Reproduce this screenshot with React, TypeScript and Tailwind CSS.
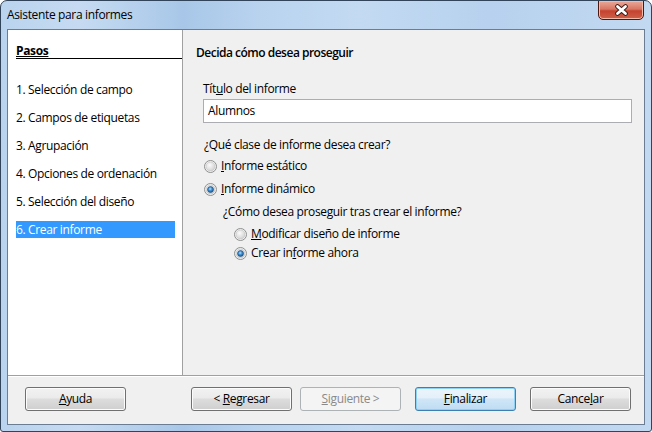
import React from 'react';

const font = { fontFamily: '"Segoe UI", "Open Sans", "Noto Sans", sans-serif' };

function Radio({ checked, id }: { checked?: boolean; id: string }) {
  return (
    <svg width="13" height="13" viewBox="0 0 13 13" className="shrink-0">
      <defs>
        <radialGradient id={`${id}-bg`} cx="0.4" cy="0.35" r="0.7">
          <stop offset="0" stopColor="#fbfbfb" />
          <stop offset="0.6" stopColor="#e2e2e2" />
          <stop offset="1" stopColor="#cfcfcf" />
        </radialGradient>
        <radialGradient id={`${id}-dot`} cx="0.45" cy="0.4" r="0.65">
          <stop offset="0" stopColor="#b9e3ff" />
          <stop offset="0.45" stopColor="#3f8fd2" />
          <stop offset="1" stopColor="#174f82" />
        </radialGradient>
      </defs>
      <circle cx="6.5" cy="6.5" r="6" fill="#f4f4f4" stroke="#8e8f8f" strokeWidth="1" />
      <circle cx="6.5" cy="6.5" r="4.5" fill={`url(#${id}-bg)`} stroke="#c2c2c2" strokeWidth="0.6" />
      {checked && <circle cx="6.5" cy="6.5" r="3" fill={`url(#${id}-dot)`} stroke="#1f4f7c" strokeWidth="0.6" />}
    </svg>
  );
}

function Button({ children, variant = 'normal', className = '' }: { children: React.ReactNode; variant?: 'normal' | 'default' | 'disabled'; className?: string }) {
  const base = 'h-[24px] w-[101px] rounded-[3px] border flex items-center justify-center text-[12px] shrink-0';
  if (variant === 'disabled') {
    return (
      <div className={`${base} ${className} border-[#adb2b5] bg-[#f4f4f4] text-[#8a8a8a]`}>
        <span>{children}</span>
      </div>
    );
  }
  if (variant === 'default') {
    return (
      <div className={`${base} ${className} border-[#3c7fb1] bg-[linear-gradient(#ebf4fb_0%,#e4f0fa_45%,#cfe6f7_50%,#bfdcf3_100%)] shadow-[inset_0_0_0_1px_#8ed1f5] text-black`}>
        <span>{children}</span>
      </div>
    );
  }
  return (
    <div className={`${base} ${className} border-[#707070] bg-[linear-gradient(#f2f2f2_0%,#ebebeb_45%,#dddddd_50%,#cfcfcf_100%)] shadow-[inset_0_0_0_1px_#fcfcfc] text-black`}>
      <span>{children}</span>
    </div>
  );
}

const steps = [
  '1. Selección de campo',
  '2. Campos de etiquetas',
  '3. Agrupación',
  '4. Opciones de ordenación',
  '5. Selección del diseño',
];

export default function App() {
  return (
    <div
      style={font}
      className="w-[652px] h-[432px] overflow-hidden rounded-t-[7px] rounded-b-[3px] border border-[#31445a] bg-[linear-gradient(90deg,#bad3ee_0%,#c6dbf2_12%,#a8c7e8_28%,#b9d3ef_40%,#c3daf2_55%,#b7d1ee_75%,#c2d9f1_100%)] text-[12px] tracking-[-0.35px] text-black"
    >
      {/* title bar */}
      <div className="h-[28px] flex items-start relative">
        <span className="pl-[6px] pt-[6px] leading-[16px] text-[12px] text-black">Asistente para informes</span>
        <div className="ml-auto mr-[7px] w-[46px] h-[20px] -mt-px rounded-b-[5px] border border-[#4b1812] bg-[linear-gradient(#e9a99a_0%,#d97663_45%,#c4432f_55%,#d0604a_100%)] shadow-[inset_0_0_0_1px_#f2b8a8] flex items-center justify-center">
          <svg width="15" height="12" viewBox="0 0 15 12">
            <path d="M3.5 2.5 L11.5 9.5 M11.5 2.5 L3.5 9.5" stroke="#3c1a14" strokeWidth="4.6" strokeLinecap="round" />
            <path d="M3.5 2.5 L11.5 9.5 M11.5 2.5 L3.5 9.5" stroke="#ffffff" strokeWidth="2.8" strokeLinecap="round" />
          </svg>
        </div>
      </div>

      {/* client area */}
      <div className="mx-[6px] h-[396px] border border-[#6b7d92] bg-[#f0f0f0] flex flex-col">
        <div className="h-[346px] flex border-b border-[#a0a0a0]">
          {/* steps */}
          <div className="w-[175px] bg-white border-r border-[#a0a0a0] pl-[8px] pt-[14px]">
            <div className="border-b border-black h-[15px] leading-[14px] font-bold">
              <span className="underline">Pasos</span>
            </div>
            <div className="mt-[22px] flex flex-col gap-[11px] pr-[7px]">
              {steps.map((s) => (
                <div key={s} className="h-[17px] leading-[17px]">{s}</div>
              ))}
              <div className="h-[17px] leading-[17px] bg-[#3399ff] text-white">
                <span className="outline outline-1 outline-dotted outline-[#c8773a] -outline-offset-1 pr-px">6. Crear informe</span>
              </div>
            </div>
          </div>

          {/* content */}
          <div className="flex-1 pl-[13px] pt-[15px]">
            <div className="font-semibold tracking-[-0.5px] leading-[16px]">Decida cómo desea proseguir</div>
            <div className="ml-[7px] mt-[20px] leading-[16px]">
              Tít<span className="underline">u</span>lo del informe
            </div>
            <div className="ml-[7px] mt-[2px] w-[429px] h-[24px] bg-white border border-[#abadb3] pl-[4px] leading-[22px]">
              Alumnos
            </div>
            <div className="ml-[8px] mt-[14px] leading-[16px]">¿Qué clase de informe desea crear?</div>
            <div className="ml-[8px] mt-[5px] h-[16px] flex items-center gap-[4px]">
              <Radio id="r1" />
              <span><span className="underline">I</span>nforme estático</span>
            </div>
            <div className="ml-[8px] mt-[7px] h-[16px] flex items-center gap-[4px]">
              <Radio id="r2" checked />
              <span><span className="underline">I</span>nforme dinámico</span>
            </div>
            <div className="ml-[27px] mt-[7px] leading-[16px]">¿Cómo desea proseguir tras crear el informe?</div>
            <div className="ml-[38px] mt-[6px] h-[16px] flex items-center gap-[4px]">
              <Radio id="r3" />
              <span><span className="underline">M</span>odificar diseño de informe</span>
            </div>
            <div className="ml-[38px] mt-[3px] h-[16px] flex items-center gap-[4px]">
              <Radio id="r4" checked />
              <span>Crear in<span className="underline">f</span>orme ahora</span>
            </div>
          </div>
        </div>

        {/* buttons */}
        <div className="flex-1 border-t border-white flex items-start pt-[10px] pl-[17px]">
          <Button><span className="underline">A</span>yuda</Button>
          <Button className="ml-[65px]">&lt; <span className="underline">R</span>egresar</Button>
          <Button variant="disabled" className="ml-[8px]"><span className="underline">S</span>iguiente &gt;</Button>
          <Button variant="default" className="ml-[14px]"><span className="underline">F</span>inalizar</Button>
          <Button className="ml-[14px]">Cance<span className="underline">l</span>ar</Button>
        </div>
      </div>
    </div>
  );
}
